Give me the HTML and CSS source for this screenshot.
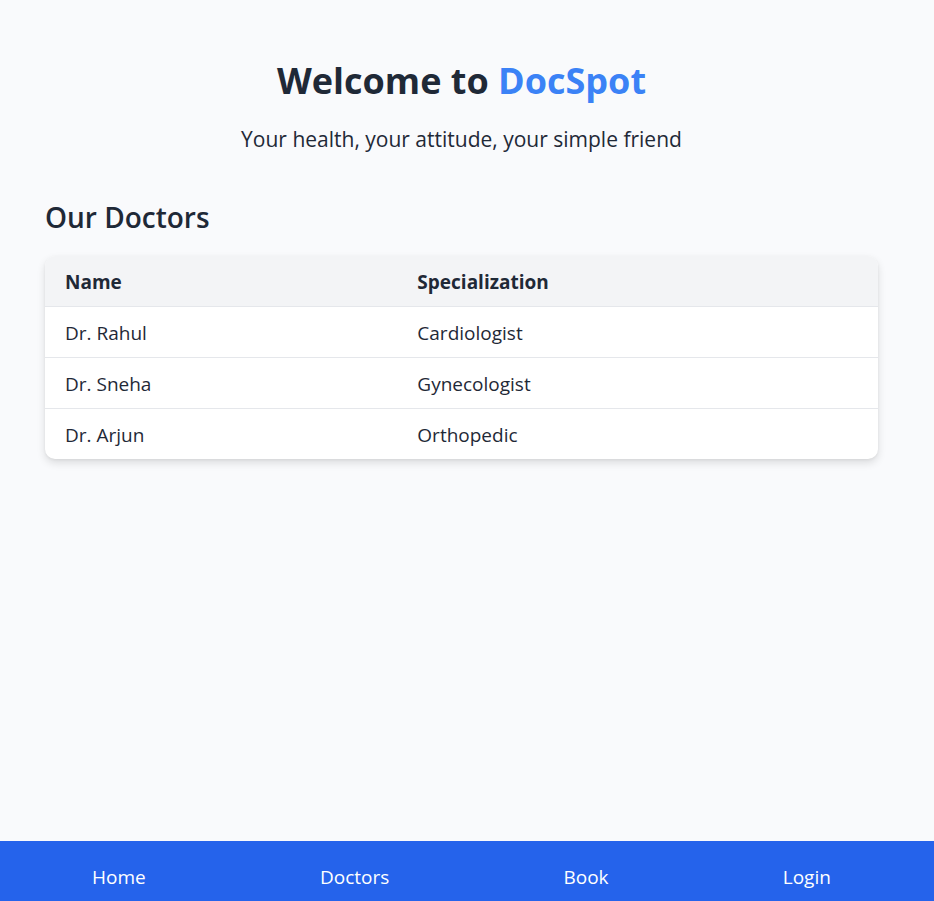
FILE: index.html
```html
<!DOCTYPE html>
<html lang="en">
<head>
<meta charset="utf-8">
<meta name="viewport" content="width=device-width, initial-scale=1">
<title>DocSpot</title>
<link rel="stylesheet" href="styles.css">
</head>
<body>
<main class="page">
  <header class="hero">
    <h1 class="hero-title">Welcome to <span class="brand">DocSpot</span></h1>
    <p class="hero-text">Your health, your attitude, your simple friend</p>
  </header>
  <section class="doctors">
    <h2 class="doctors-title" id="doctors-title">Our Doctors</h2>
    <div class="card">
      <table class="table" aria-labelledby="doctors-title">
        <thead>
          <tr><th class="name" scope="col">Name</th><th scope="col">Specialization</th></tr>
        </thead>
        <tbody>
          <tr><td>Dr. Rahul</td><td>Cardiologist</td></tr>
          <tr><td>Dr. Sneha</td><td>Gynecologist</td></tr>
          <tr><td>Dr. Arjun</td><td>Orthopedic</td></tr>
        </tbody>
      </table>
    </div>
  </section>
</main>
<nav class="nav">
  <a href="#">Home</a>
  <a href="#">Doctors</a>
  <a href="#">Book</a>
  <a href="#">Login</a>
</nav>
</body>
</html>
```

FILE: styles.css
```css
* { box-sizing: border-box; }

body {
  margin: 0;
  min-height: 100vh;
  display: flex;
  flex-direction: column;
  background: #f9fafc;
  color: #1f2937;
  font-family: "Segoe UI", "Open Sans", "Noto Sans", sans-serif;
  font-size: 19px;
  line-height: 30px;
}

.page {
  flex: 1;
  padding: 56px 56px 40px 45px;
}

.hero {
  text-align: center;
  margin-bottom: 40px;
}

.hero-title {
  margin: 0 0 16px;
  font-size: 36px;
  line-height: 50px;
  font-weight: 700;
}

.brand { color: #3b82f6; }

.hero-text {
  margin: 0;
  font-size: 21px;
  line-height: 34px;
}

.doctors-title {
  margin: 0 0 18px;
  font-size: 28px;
  line-height: 42px;
  font-weight: 600;
}

.card {
  overflow: hidden;
  background: #fff;
  border-radius: 10px;
  box-shadow: 0 4px 8px rgba(0, 0, 0, 0.12), 0 1px 3px rgba(0, 0, 0, 0.05);
}

.table {
  width: 100%;
  border-collapse: collapse;
  text-align: left;
}

.table th, .table td { padding: 11px 20px 9px; }

.table th {
  background: #f3f4f6;
  font-weight: 700;
}

.name { width: 42.3%; }

.table tbody tr { border-top: 1px solid #e5e7eb; }

.nav {
  position: sticky;
  bottom: 0;
  display: flex;
  justify-content: space-around;
  padding: 21px 16px 9px 5px;
  background: #2563eb;
}

.nav a {
  color: #fff;
  text-decoration: none;
}
```
